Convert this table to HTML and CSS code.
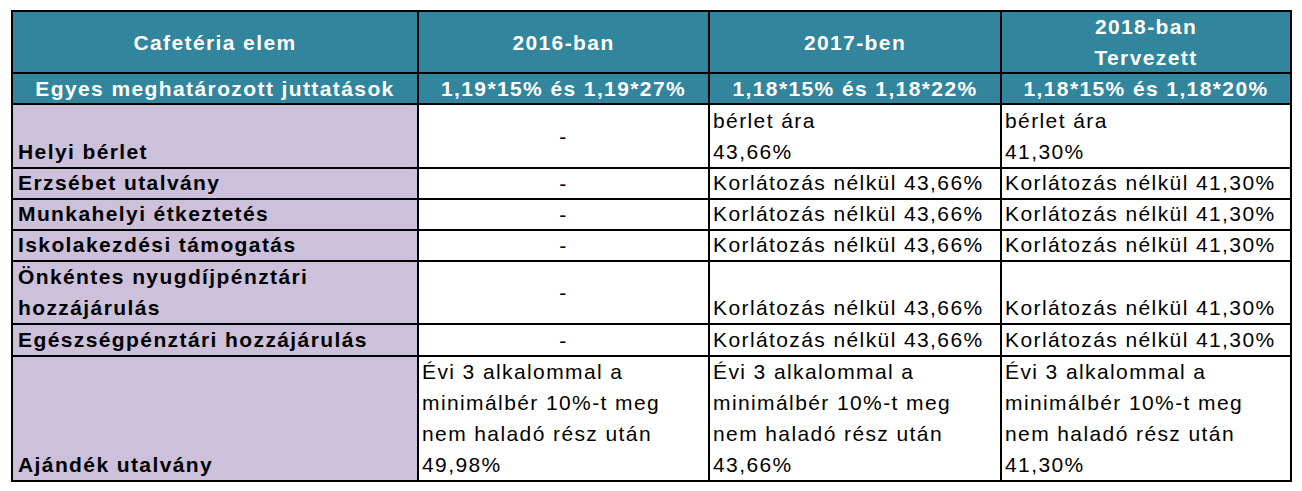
FILE: index.html
```html
<!DOCTYPE html>
<html lang="hu">
<head>
<meta charset="utf-8">
<title>Cafetéria</title>
<link rel="stylesheet" href="styles.css">
</head>
<body>
<div class="sheet">
  <div class="cell head">Cafetéria elem</div>
  <div class="cell head">2016-ban</div>
  <div class="cell head">2017-ben</div>
  <div class="cell head">2018-ban<br>Tervezett</div>

  <div class="cell head sub">Egyes meghatározott juttatások</div>
  <div class="cell head sub">1,19*15% és 1,19*27%</div>
  <div class="cell head sub">1,18*15% és 1,18*22%</div>
  <div class="cell head sub">1,18*15% és 1,18*20%</div>

  <div class="cell label">Helyi bérlet</div>
  <div class="cell dash">-</div>
  <div class="cell val">bérlet ára<br>43,66%</div>
  <div class="cell val">bérlet ára<br>41,30%</div>

  <div class="cell label">Erzsébet utalvány</div>
  <div class="cell dash">-</div>
  <div class="cell val">Korlátozás nélkül 43,66%</div>
  <div class="cell val">Korlátozás nélkül 41,30%</div>

  <div class="cell label">Munkahelyi étkeztetés</div>
  <div class="cell dash">-</div>
  <div class="cell val">Korlátozás nélkül 43,66%</div>
  <div class="cell val">Korlátozás nélkül 41,30%</div>

  <div class="cell label">Iskolakezdési támogatás</div>
  <div class="cell dash">-</div>
  <div class="cell val">Korlátozás nélkül 43,66%</div>
  <div class="cell val">Korlátozás nélkül 41,30%</div>

  <div class="cell label">Önkéntes nyugdíjpénztári<br>hozzájárulás</div>
  <div class="cell dash">-</div>
  <div class="cell val">Korlátozás nélkül 43,66%</div>
  <div class="cell val">Korlátozás nélkül 41,30%</div>

  <div class="cell label">Egészségpénztári hozzájárulás</div>
  <div class="cell dash">-</div>
  <div class="cell val">Korlátozás nélkül 43,66%</div>
  <div class="cell val">Korlátozás nélkül 41,30%</div>

  <div class="cell label">Ajándék utalvány</div>
  <div class="cell val">Évi 3 alkalommal a<br>minimálbér 10%-t meg<br>nem haladó rész után<br>49,98%</div>
  <div class="cell val">Évi 3 alkalommal a<br>minimálbér 10%-t meg<br>nem haladó rész után<br>43,66%</div>
  <div class="cell val">Évi 3 alkalommal a<br>minimálbér 10%-t meg<br>nem haladó rész után<br>41,30%</div>
</div>
</body>
</html>
```

FILE: styles.css
```css
html, body {
  margin: 0;
  padding: 0;
  background: #ffffff;
}

body {
  padding: 10px 0 0 11px;
  font-family: "Liberation Sans", Arial, sans-serif;
}

.sheet {
  display: grid;
  width: max-content;
  grid-template-columns: 404px 289px 290px 288px;
  grid-template-rows: 60px 29px 62px 29px 29px 29px 61px 30px 123px;
  gap: 2px;
  padding: 2px;
  background: #000000;
}

.cell {
  display: flex;
  flex-direction: column;
  justify-content: flex-end;
  overflow: visible;
  font-size: 21px;
  line-height: 31px;
  letter-spacing: 1.4px;
  white-space: nowrap;
  color: #000000;
  background: #ffffff;
}

.head {
  background: #31859c;
  color: #ffffff;
  font-weight: bold;
  text-align: center;
  justify-content: center;
}

.label {
  background: #ccc0da;
  font-weight: bold;
  padding-left: 5px;
}

.dash {
  text-align: center;
  justify-content: center;
}

.val {
  padding-left: 3px;
}
```
